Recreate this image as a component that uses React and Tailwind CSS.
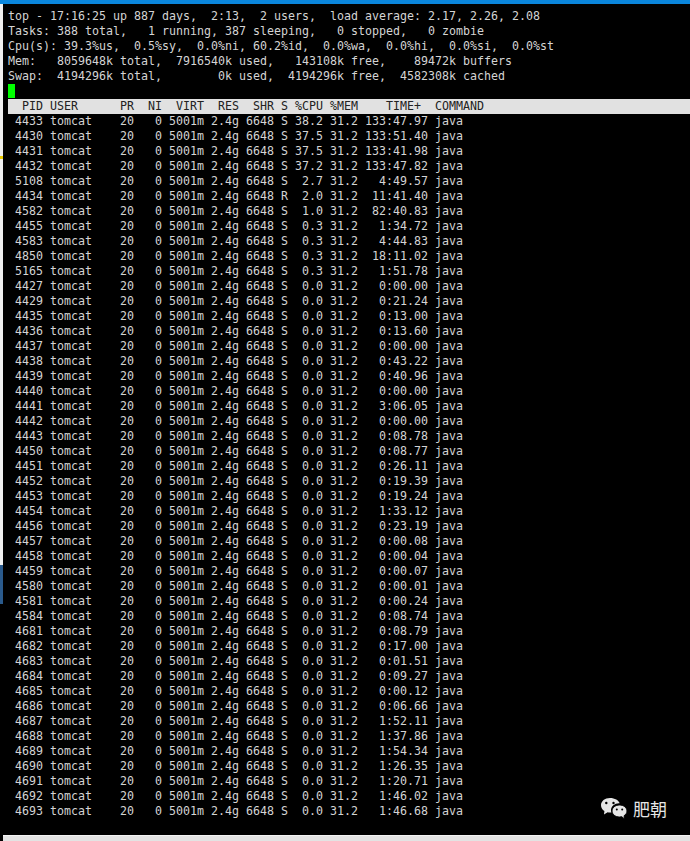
const summary = [
  "top - 17:16:25 up 887 days,  2:13,  2 users,  load average: 2.17, 2.26, 2.08",
  "Tasks: 388 total,   1 running, 387 sleeping,   0 stopped,   0 zombie",
  "Cpu(s): 39.3%us,  0.5%sy,  0.0%ni, 60.2%id,  0.0%wa,  0.0%hi,  0.0%si,  0.0%st",
  "Mem:   8059648k total,  7916540k used,   143108k free,    89472k buffers",
  "Swap:  4194296k total,        0k used,  4194296k free,  4582308k cached",
];

const header = "  PID USER      PR  NI  VIRT  RES  SHR S %CPU %MEM    TIME+  COMMAND";

const rows = [
  [4433, "S", "38.2", "133:47.97"], [4430, "S", "37.5", "133:51.40"], [4431, "S", "37.5", "133:41.98"],
  [4432, "S", "37.2", "133:47.82"], [5108, "S", "2.7", "4:49.57"], [4434, "R", "2.0", "11:41.40"],
  [4582, "S", "1.0", "82:40.83"], [4455, "S", "0.3", "1:34.72"], [4583, "S", "0.3", "4:44.83"],
  [4850, "S", "0.3", "18:11.02"], [5165, "S", "0.3", "1:51.78"], [4427, "S", "0.0", "0:00.00"],
  [4429, "S", "0.0", "0:21.24"], [4435, "S", "0.0", "0:13.00"], [4436, "S", "0.0", "0:13.60"],
  [4437, "S", "0.0", "0:00.00"], [4438, "S", "0.0", "0:43.22"], [4439, "S", "0.0", "0:40.96"],
  [4440, "S", "0.0", "0:00.00"], [4441, "S", "0.0", "3:06.05"], [4442, "S", "0.0", "0:00.00"],
  [4443, "S", "0.0", "0:08.78"], [4450, "S", "0.0", "0:08.77"], [4451, "S", "0.0", "0:26.11"],
  [4452, "S", "0.0", "0:19.39"], [4453, "S", "0.0", "0:19.24"], [4454, "S", "0.0", "1:33.12"],
  [4456, "S", "0.0", "0:23.19"], [4457, "S", "0.0", "0:00.08"], [4458, "S", "0.0", "0:00.04"],
  [4459, "S", "0.0", "0:00.07"], [4580, "S", "0.0", "0:00.01"], [4581, "S", "0.0", "0:00.24"],
  [4584, "S", "0.0", "0:08.74"], [4681, "S", "0.0", "0:08.79"], [4682, "S", "0.0", "0:17.00"],
  [4683, "S", "0.0", "0:01.51"], [4684, "S", "0.0", "0:09.27"], [4685, "S", "0.0", "0:00.12"],
  [4686, "S", "0.0", "0:06.66"], [4687, "S", "0.0", "1:52.11"], [4688, "S", "0.0", "1:37.86"],
  [4689, "S", "0.0", "1:54.34"], [4690, "S", "0.0", "1:26.35"], [4691, "S", "0.0", "1:20.71"],
  [4692, "S", "0.0", "1:46.02"], [4693, "S", "0.0", "1:46.68"],
];

function rowText([pid, state, cpu, time]) {
  return ` ${pid} tomcat    20   0 5001m 2.4g 6648 ${state} ${cpu.padStart(4)} 31.2 ${time.padStart(9)} java`;
}

function Line({ children }) {
  return <div className="h-[15px] leading-[15px] whitespace-pre">{children}</div>;
}

function WeChat() {
  return (
    <svg width="28" height="24" viewBox="0 0 28 24" className="block">
      <path d="M10 1C4.8 1 1 4.2 1 8.2c0 2.4 1.3 4.4 3.4 5.8l-.4 3.6 3.6-2.3c.8.2 1.6.3 2.4.3.6 0 1 0 1.5-.1-.3-.8-.5-1.6-.5-2.4 0-3.8 3.6-6.8 8-6.8h.7C18.700 3.300 14.800 1 10 1z" fill="#e6e6e6" />
      <circle cx="6.300" cy="6" r="1.200" fill="#000" />
      <circle cx="13.500" cy="6" r="1.200" fill="#000" />
      <path d="M19.500 8c-4.100 0-7.500 2.700-7.500 6s3.400 6 7.500 6c.8 0 1.500-.1 2.200-.3l2.800 2.200-.4-3.200c1.700-1.100 2.900-2.800 2.900-4.700 0-3.300-3.400-6-7.500-6z" fill="#e6e6e6" stroke="#000" strokeWidth="1" />
      <circle cx="16.800" cy="12.500" r="1" fill="#000" />
      <circle cx="22.200" cy="12.500" r="1" fill="#000" />
    </svg>
  );
}

export default function App() {
  return (
    <div className="relative flex h-[841px] w-[690px] flex-col overflow-hidden bg-black font-['DejaVu_Sans_Mono',monospace] text-[11.63px] text-[#d4d4d4]">
      <div className="h-1 shrink-0 bg-[#0a86dc]" />
      <div className="flex min-h-0 flex-1">
        <div className="flex w-[3px] shrink-0 flex-col">
          <div className="h-[152px] bg-[#f0f0f0]" />
          <div className="h-[3px] bg-[#e8c800]" />
          <div className="h-[406px] bg-[#f0f0f0]" />
          <div className="h-[39px] bg-[#2a5a8c]" />
        </div>
        <div className="min-w-0 flex-1 pt-[5px]">
          <div className="pl-[5px]">
            {summary.map((s) => (
              <Line key={s}>{s}</Line>
            ))}
            <div className="h-[15px]">
              <div className="h-[14px] w-[7px] bg-[#00ff00]" />
            </div>
          </div>
          <div className="ml-[5px] bg-[#e1e1e1] text-[#222222]">
            <Line>{header}</Line>
          </div>
          <div className="pl-[5px]">
            {rows.map((r) => (
              <Line key={r[0]}>{rowText(r)}</Line>
            ))}
          </div>
        </div>
      </div>
      <div className="ml-[3px] h-1.5 shrink-0 border-t border-[#f4f4f4] bg-[#e3e3e3]" />
      <div className="absolute left-[600px] top-[797px] flex items-center gap-[5px]">
        <WeChat />
        <span className="font-['Noto_Sans_CJK_SC',sans-serif] text-[17px] leading-6 text-[#e6e6e6]">肥朝</span>
      </div>
    </div>
  );
}
